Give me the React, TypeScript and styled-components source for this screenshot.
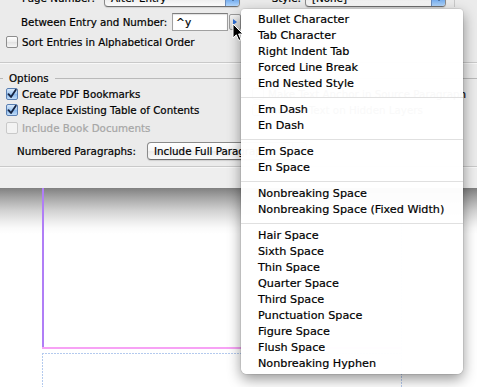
import styled, { createGlobalStyle } from "styled-components"

const GlobalStyle = createGlobalStyle`
  html, body { margin: 0; padding: 0; background: #fff; }
  * { box-sizing: border-box; }
`

const Screen = styled.div`
  position: relative;
  width: 477px;
  height: 387px;
  overflow: hidden;
  display: flex;
  flex-direction: column;
  background: #fff;
  font-family: "Lucida Grande", "DejaVu Sans", sans-serif;
  -webkit-text-stroke: 0.2px currentColor;
`

const Dialog = styled.div`
  flex: none;
  height: 188px;
  display: flex;
  flex-direction: column;
  overflow: hidden;
  background: #ebebeb;
  font-size: 10.3px;
  color: #000;
`

const Row = styled.div<{ top: number; h: number; left?: number }>`
  flex: none;
  display: flex;
  align-items: center;
  margin-top: ${p => p.top}px;
  height: ${p => p.h}px;
  padding-left: ${p => p.left ?? 0}px;
  white-space: nowrap;
`

const Label = styled.span<{ w: number; right?: boolean }>`
  flex: none;
  width: ${p => p.w}px;
  ${p => (p.right ? "text-align: right; padding-right: 4px;" : "")}
`

const Popup = styled.div<{ w: number }>`
  flex: none;
  width: ${p => p.w}px;
  height: 18px;
  display: flex;
  align-items: center;
  border: 1px solid #8a8a8a;
  border-bottom-color: #6f6f6f;
  border-radius: 4px;
  background: linear-gradient(#ffffff, #f6f6f6 50%, #ebebeb 51%, #fbfbfb);
  box-shadow: 0 1px 1px rgba(0, 0, 0, 0.12);
  overflow: hidden;
`

const PopupText = styled.span`
  flex: 1;
  padding-left: 6px;
  overflow: hidden;
`

const PopupCap = styled.span`
  flex: none;
  width: 14px;
  align-self: stretch;
  display: flex;
  align-items: center;
  justify-content: center;
  border-left: 1px solid #6b8dbd;
  background: linear-gradient(#cfe3fb, #8ab9ef 50%, #62a0ea 51%, #b2d6fc);

  &::after {
    content: "";
    border-left: 3px solid transparent;
    border-right: 3px solid transparent;
    border-top: 4px solid #17233d;
    margin-top: 2px;
  }
`

const ColumnRule = styled.span`
  flex: none;
  align-self: stretch;
  width: 1px;
  margin-left: 8px;
  background: #c9c9c9;
`

const TextField = styled.div`
  flex: none;
  width: 56px;
  height: 18px;
  display: flex;
  align-items: center;
  padding-left: 3px;
  background: #fff;
  border: 1px solid #a0a0a0;
  border-top-color: #7d7d7d;
  box-shadow: inset 0 1px 1px rgba(0, 0, 0, 0.12);
  font-size: 10.6px;
`

const InsertButton = styled.div`
  flex: none;
  width: 12px;
  height: 16px;
  margin-left: 1px;
  display: flex;
  align-items: center;
  justify-content: center;
  border: 1px solid #9a9a9a;
  border-radius: 2px;
  background: linear-gradient(#f4f4f4, #d6d6d6);

  &::after {
    content: "";
    border-top: 3px solid transparent;
    border-bottom: 3px solid transparent;
    border-left: 4px solid #2f6fd6;
  }
`

const Box = styled.span<{ checked?: boolean; disabled?: boolean }>`
  flex: none;
  width: 12px;
  height: 12px;
  margin-right: 4px;
  display: flex;
  align-items: center;
  justify-content: center;
  border-radius: 2px;
  border: 1px solid ${p => (p.disabled ? "#c9c9c9" : p.checked ? "#5a7fb2" : "#8d8d8d")};
  background: ${p =>
    p.disabled
      ? "#f3f3f3"
      : p.checked
      ? "linear-gradient(#d9e9fb, #a3c9f1 50%, #86b6ec 51%, #c3ddf8)"
      : "linear-gradient(#ffffff, #ededed 50%, #e2e2e2 51%, #f6f6f6)"};
`

const CheckText = styled.span<{ disabled?: boolean }>`
  color: ${p => (p.disabled ? "#a6a6a6" : "#000")};
`

const CheckItem = styled.div<{ second?: boolean }>`
  display: flex;
  align-items: center;
  ${p => (p.second ? "" : "width: 252px; padding-left: 6px;")}
`

const Check = ({ label, checked, disabled, second }: { label: string; checked?: boolean; disabled?: boolean; second?: boolean }) => (
  <CheckItem second={second}>
    <Box checked={checked} disabled={disabled}>
      {checked && (
        <svg width="10" height="10" viewBox="0 0 10 10">
          <path d="M1.5 5.2 L4 8 L8.8 0.8" fill="none" stroke="#14223f" strokeWidth="1.8" strokeLinecap="round" strokeLinejoin="round" />
        </svg>
      )}
    </Box>
    <CheckText disabled={disabled}>{label}</CheckText>
  </CheckItem>
)

const Divider = styled.div<{ top: number }>`
  flex: none;
  margin-top: ${p => p.top}px;
  height: 2px;
  border-top: 1px solid #c9c9c9;
  border-bottom: 1px solid #f8f8f8;
`

const Legend = styled.div`
  flex: none;
  margin-top: 7px;
  height: 14px;
  display: flex;
  align-items: center;
`

const LegendRule = styled.span<{ w?: number }>`
  flex: ${p => (p.w ? "none" : "1")};
  width: ${p => (p.w ? `${p.w}px` : "auto")};
  height: 1px;
  background: #b9b9b9;
`

const LegendText = styled.span`
  padding: 0 6px;
`

const Footer = styled.div`
  flex: 1;
  background: #eeeeee;
`

const Canvas = styled.div`
  position: relative;
  flex: 1;
  background: linear-gradient(#808080 0, #a7a7a7 10px, #d0d0d0 22px, #ececec 33px, #fafafa 40px, #fff 46px);
`

const Guide = styled.div<{ x: number; y: number; w: number; h?: number; color: string }>`
  position: absolute;
  left: ${p => p.x}px;
  top: ${p => p.y}px;
  width: ${p => p.w}px;
  ${p => (p.h === undefined ? "bottom: 0;" : `height: ${p.h}px;`)}
  background: ${p => p.color};
`

const Menu = styled.div`
  position: absolute;
  left: 241px;
  top: 9px;
  width: 222px;
  padding: 3px 0 2px;
  background: rgba(255, 255, 255, 0.975);
  border-radius: 4px 4px 6px 6px;
  box-shadow: 0 5px 14px rgba(0, 0, 0, 0.42), 0 0 0 1px rgba(0, 0, 0, 0.07);
  font-size: 11.2px;
  color: #000;
`

const MenuItem = styled.div`
  height: 16px;
  line-height: 16px;
  padding-left: 17px;
  white-space: nowrap;
`

const MenuSeparator = styled.div`
  height: 10px;
  display: flex;
  align-items: center;

  &::after {
    content: "";
    flex: 1;
    height: 1px;
    background: #e0e0e0;
  }
`

const Cursor = styled.svg`
  position: absolute;
  left: 232px;
  top: 23px;
`

const menuGroups = [
  ["Bullet Character", "Tab Character", "Right Indent Tab", "Forced Line Break", "End Nested Style"],
  ["Em Dash", "En Dash"],
  ["Em Space", "En Space"],
  ["Nonbreaking Space", "Nonbreaking Space (Fixed Width)"],
  [
    "Hair Space",
    "Sixth Space",
    "Thin Space",
    "Quarter Space",
    "Third Space",
    "Punctuation Space",
    "Figure Space",
    "Flush Space",
    "Nonbreaking Hyphen",
  ],
]

const dotsH = "repeating-linear-gradient(90deg, #b4caee 0 2px, transparent 2px 3px)"
const dotsV = "repeating-linear-gradient(180deg, #b4caee 0 2px, transparent 2px 3px)"

export default function App() {
  return (
    <Screen>
      <GlobalStyle />
      <Dialog>
        <Row top={-11} h={18} left={22}>
          <Label w={82}>Page Number:</Label>
          <Popup w={136}>
            <PopupText>After Entry</PopupText>
            <PopupCap />
          </Popup>
          <Label w={65} right>Style:</Label>
          <Popup w={141}>
            <PopupText>[None]</PopupText>
            <PopupCap />
          </Popup>
          <ColumnRule />
        </Row>
        <Row top={6} h={18} left={21}>
          <Label w={151}>Between Entry and Number:</Label>
          <TextField>^y</TextField>
          <InsertButton />
        </Row>
        <Row top={5} h={12}>
          <Check label="Sort Entries in Alphabetical Order" />
        </Row>
        <Divider top={14} />
        <Legend>
          <LegendRule w={3} />
          <LegendText>Options</LegendText>
          <LegendRule />
        </Legend>
        <Row top={3} h={12}>
          <Check label="Create PDF Bookmarks" checked />
          <Check label="Make Text Anchor in Source Paragraph" second />
        </Row>
        <Row top={4} h={12}>
          <Check label="Replace Existing Table of Contents" checked />
          <Check label="Include Text on Hidden Layers" second />
        </Row>
        <Row top={6} h={12}>
          <Check label="Include Book Documents" disabled />
        </Row>
        <Row top={8} h={17} left={17}>
          <Label w={130}>Numbered Paragraphs:</Label>
          <Popup w={160}>
            <PopupText>Include Full Paragraph</PopupText>
            <PopupCap />
          </Popup>
        </Row>
        <Divider top={7} />
        <Footer />
      </Dialog>
      <Canvas>
        <Guide x={42} y={0} w={2} h={161} color="#b07ef6" />
        <Guide x={42} y={159} w={360} h={2} color="#f7a2f5" />
        <Guide x={42} y={165} w={360} h={1} color={dotsH} />
        <Guide x={42} y={165} w={1} color={dotsV} />
        <Guide x={401} y={20} w={1} color={dotsV} />
      </Canvas>
      <Menu>
        {menuGroups.map((group, i) => (
          <div key={i}>
            {i > 0 && <MenuSeparator />}
            {group.map(item => (
              <MenuItem key={item}>{item}</MenuItem>
            ))}
          </div>
        ))}
      </Menu>
      <Cursor width="13" height="19" viewBox="0 0 13 19">
        <path d="M1 1 L1 15 L4.3 11.8 L6.8 17.5 L9 16.6 L6.6 11 L11 11 Z" fill="#000" stroke="#fff" strokeWidth="1" strokeLinejoin="round" />
      </Cursor>
    </Screen>
  )
}
